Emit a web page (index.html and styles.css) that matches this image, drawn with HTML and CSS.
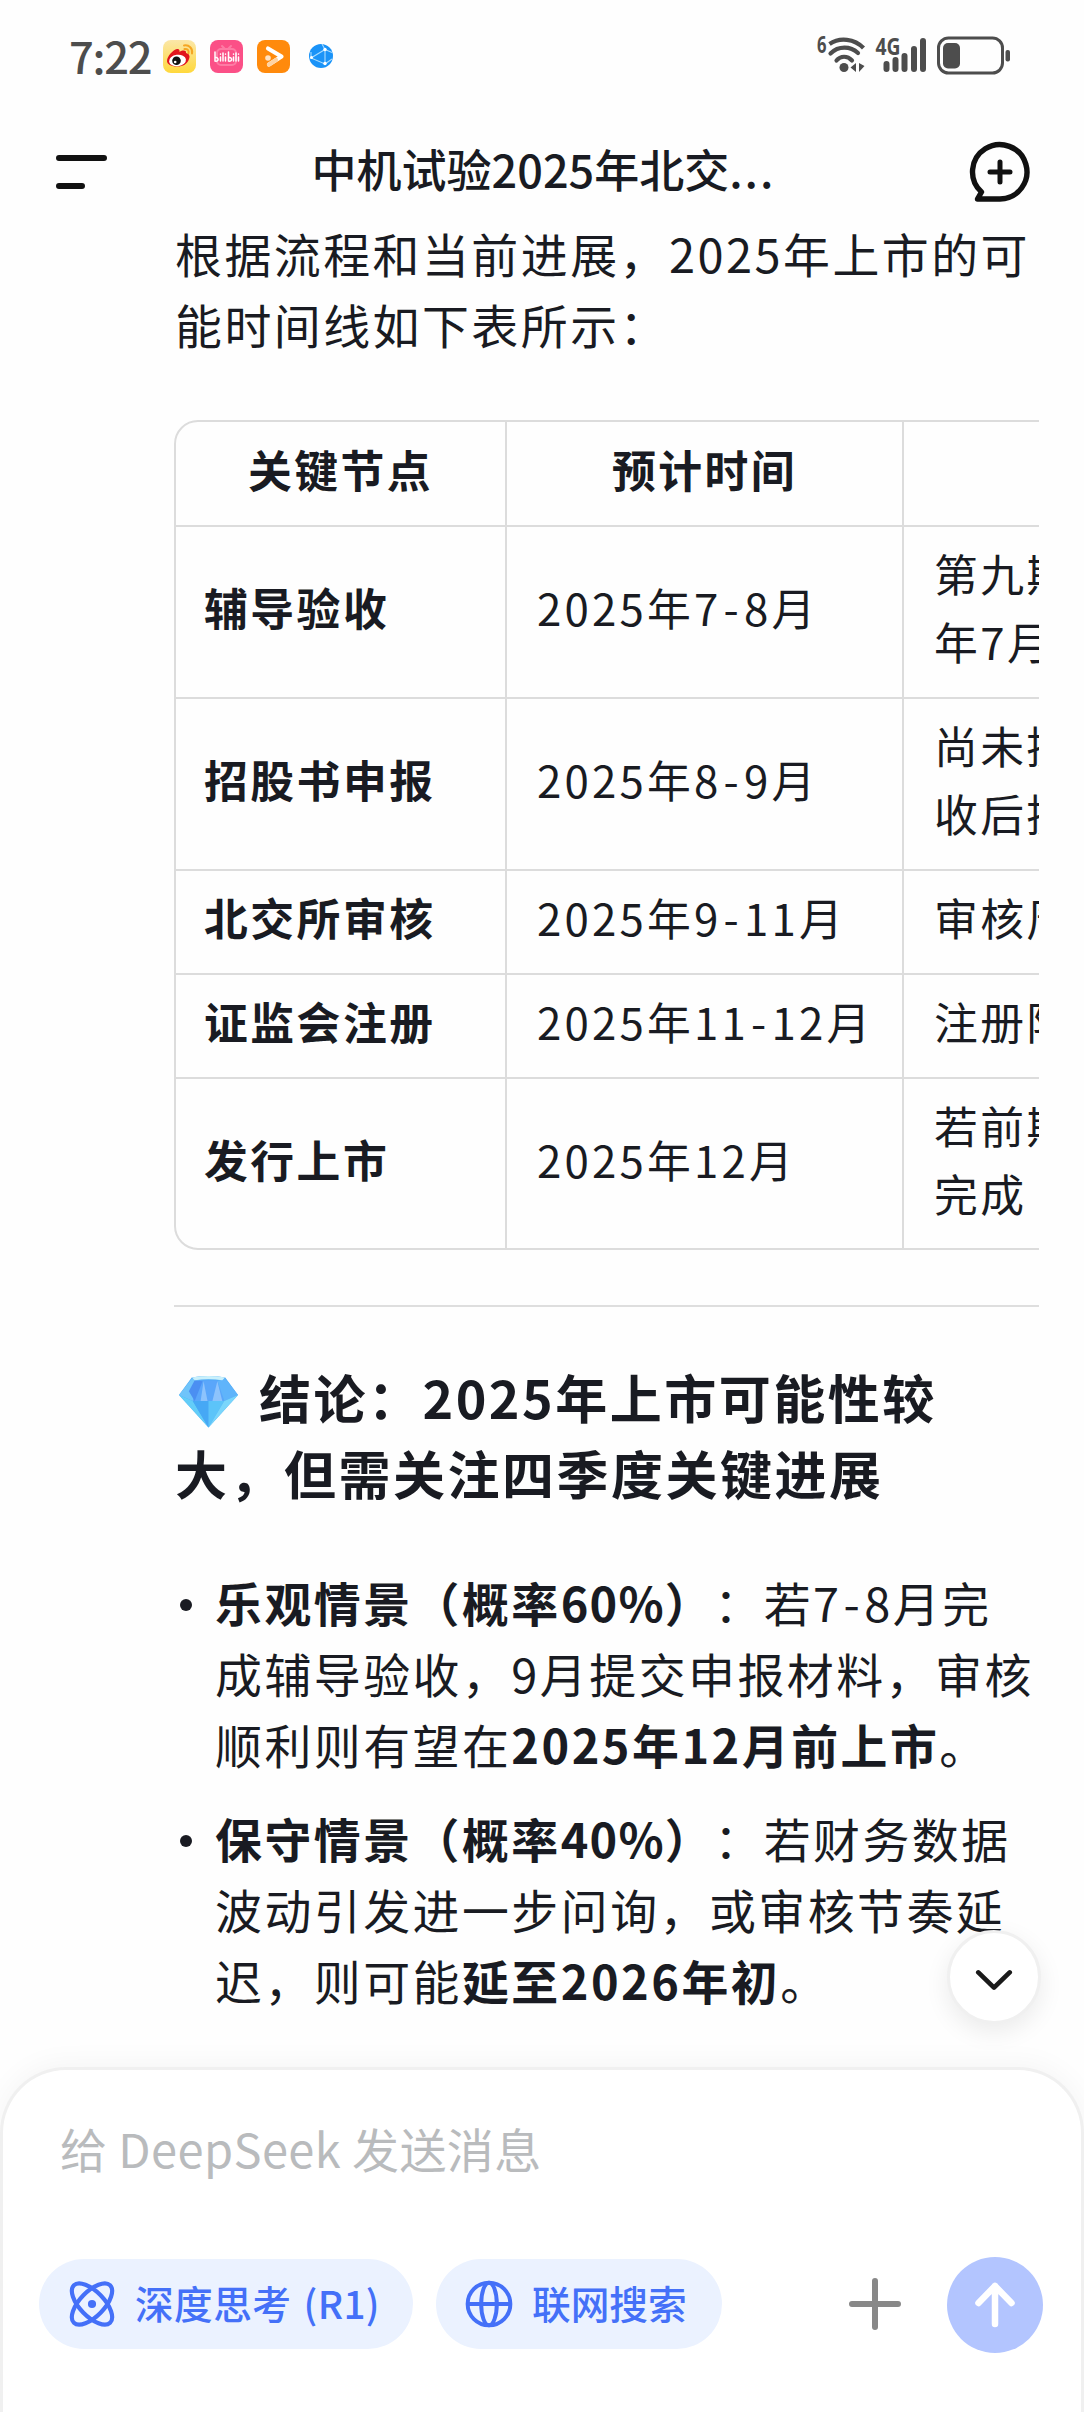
FILE: index.html
```html
<!DOCTYPE html>
<html lang="zh-CN">
  <head>
    <meta charset="UTF-8" />
    <meta name="viewport" content="width=device-width, initial-scale=1.0" />
    <title>DeepSeek</title>
    <link rel="stylesheet" href="styles.css">
  </head>
  <body>
    <div class="status-bar">
      <span class="clock">7:22</span>
      <svg class="app" viewBox="0 0 33 33">
        <defs>
          <linearGradient id="weibo" x1="0" y1="0" x2="0" y2="1">
            <stop offset="0" stop-color="#fbe7a8" />
            <stop offset="1" stop-color="#ffd83c" />
          </linearGradient>
        </defs>
        <rect width="33" height="33" rx="8" fill="url(#weibo)" />
        <path d="M4 21c0-5 6-11 10-12 2-.5 3 1 2.500 3 3-2 7-2 6.500 1 4 1 4 4 3 6-1.500 5-6 7.500-12 7.500S4 24 4 21z" fill="#e1141c" />
        <ellipse cx="14.500" cy="20.500" rx="8.500" ry="5.700" fill="#fff" transform="rotate(-8 14.500 20.500)" />
        <circle cx="13.500" cy="20.800" r="4.300" fill="#111" />
        <circle cx="12.200" cy="22" r="1.300" fill="#fff" />
        <path d="M21 5.500c5-1 9 3 8 8M21.500 9c3-.5 4.600 1.500 4 4" fill="none" stroke="#f5a623" stroke-width="2" stroke-linecap="round" />
      </svg>
      <svg class="app" viewBox="0 0 33 33">
        <rect width="33" height="33" rx="8" fill="#fb5087" />
        <path d="M12 6l3 3M21 6l-3 3" stroke="#fd7ba4" stroke-width="2" stroke-linecap="round" />
        <rect x="7" y="9" width="19" height="16" rx="4" fill="none" stroke="#fd7ba4" stroke-width="2" />
        <g fill="none" stroke="#fff" stroke-width="1.500" stroke-linecap="round">
          <path d="M5 12v9c4 1 4-4 .5-3.500M10.500 17v4M10.500 14v.3M13 13v8M15.500 17v4M15.500 14v.3M18.500 12v9c4 1 4-4 .5-3.500M23.500 17v4M23.500 14v.3M26 13v8M28.500 17v4M28.500 14v.3" />
        </g>
      </svg>
      <svg class="app" viewBox="0 0 33 33">
        <rect width="33" height="33" rx="8" fill="#ff8a0c" />
        <path d="M11 8.500l13.500 8L12 24.500" fill="none" stroke="#fff" stroke-width="4.200" stroke-linecap="round" stroke-linejoin="round" />
        <path d="M12 24.500l7-4.500" stroke="#ffd3a3" stroke-width="4.200" stroke-linecap="round" />
        <circle cx="11" cy="18" r="2.800" fill="#ffe2c2" />
      </svg>
      <svg class="app globe" viewBox="0 0 24 24">
        <circle cx="12" cy="12" r="12" fill="#1a93f8" />
        <path d="M16 5.500L2 14l14 6zM16 5.500L13 0M16 5.500l7 3M16 20l7-5M2 14V8" fill="none" stroke="#a9dcff" stroke-width="1.100" />
        <g fill="#fff">
          <circle cx="16" cy="5.500" r="1.700" />
          <circle cx="2.500" cy="13.500" r="1.500" />
          <circle cx="16" cy="19.500" r="1.700" />
        </g>
      </svg>
      <svg class="signals" viewBox="0 -15 200 70">
        <g fill="#4d4d4d" font-family="'Open Sans', 'Noto Sans', sans-serif" font-weight="700">
          <text x="0" y="16" font-size="23" textLength="9.500" lengthAdjust="spacingAndGlyphs">6</text>
          <text x="58.500" y="17.800" font-size="22.500" textLength="25" lengthAdjust="spacingAndGlyphs">4G</text>
        </g>
        <g fill="none" stroke="#4d4d4d" stroke-width="4.200" stroke-linecap="round">
          <path d="M12.500 7c10-7 25-5.500 34 4" stroke-linecap="butt" />
          <path d="M13.500 16.500c8-8 20-7.500 27.500-.5" />
          <path d="M19.500 23.500c4-5 11-5 15.500 0" />
        </g>
        <circle cx="27" cy="30.500" r="4.500" fill="#4d4d4d" />
        <path d="M39 26v9l-5.500-4.500zM42 26v9l5.500-6z" fill="#4d4d4d" />
        <path d="M69.500 27v5M78.500 23v9M87.500 19v13M97 12v20M106 4v28" stroke="#4d4d4d" stroke-width="6" stroke-linecap="round" />
        <rect x="121.500" y="1" width="64" height="35" rx="10" fill="none" stroke="#4d4d4d" stroke-width="3" />
        <rect x="126" y="6" width="17" height="25.500" rx="5" fill="#4d4d4d" />
        <rect x="188.500" y="13" width="4.500" height="11.500" rx="2" fill="#4d4d4d" />
      </svg>
    </div>

    <header class="header">
      <svg class="menu-icon" viewBox="0 0 51 38">
        <path d="M3 5h45M3 33h23" stroke="#111" stroke-width="6" stroke-linecap="round" />
      </svg>
      <h1>中机试验2025年北交<span class="dots">...</span></h1>
      <svg class="chat-icon" viewBox="0 0 62 62">
        <path d="M31 58H8.500l4-7A27.200 27.200 0 1 1 31 58z" fill="none" stroke="#111" stroke-width="5.400" stroke-linejoin="round" />
        <path d="M31 21v20M21 31h20" stroke="#111" stroke-width="5" stroke-linecap="round" />
      </svg>
    </header>

    <main class="chat">
      <p>根据流程和当前进展，2025年上市的可<br>能时间线如下表所示：</p>

      <div class="table-wrap">
        <table>
          <colgroup>
            <col class="col-node" />
            <col class="col-time" />
            <col class="col-desc" />
          </colgroup>
          <tr class="short">
            <th>关键节点</th>
            <th>预计时间</th>
            <th></th>
          </tr>
          <tr>
            <td><b>辅导验收</b></td>
            <td>2025年7<span class="dash">-</span>8月</td>
            <td>第九期<br>年7月</td>
          </tr>
          <tr>
            <td><b>招股书申报</b></td>
            <td>2025年8<span class="dash">-</span>9月</td>
            <td>尚未提<br>收后提</td>
          </tr>
          <tr class="short">
            <td><b>北交所审核</b></td>
            <td>2025年9<span class="dash">-</span>11月</td>
            <td>审核周</td>
          </tr>
          <tr class="short">
            <td><b>证监会注册</b></td>
            <td>2025年11<span class="dash">-</span>12月</td>
            <td>注册阶</td>
          </tr>
          <tr>
            <td><b>发行上市</b></td>
            <td>2025年12月</td>
            <td>若前期<br>完成</td>
          </tr>
        </table>
      </div>

      <hr />

      <h2>
        <svg class="gem" viewBox="0 0 62 54">
          <path d="M14 2Q31-1 48 2L61 20 31 53 1 20z" fill="#4aa8f5" />
          <path d="M14 3L1 20l14 6 8-20z" fill="#6fc4fa" />
          <path d="M48 3l13 17-14 6-8-20z" fill="#5fb4fb" />
          <path d="M22 5h18l7 21H15z" fill="#5aa6fa" />
          <path d="M17 5l8 1-8 20-6-10z" fill="#4b8ff2" />
          <path d="M26 6l-3 20h7zM40 6l-5 20h10z" fill="#8dc3fc" />
          <path d="M14 2Q31-1 48 2L45 5Q31 3 17 5z" fill="#c9f0fb" />
          <path d="M1 20l14 6 16 27z" fill="#63cdf8" />
          <path d="M15 26h16v27z" fill="#46a8f5" />
          <path d="M31 26h16L31 53z" fill="#5cc4f9" />
          <path d="M61 20l-14 6-16 27z" fill="#7ad6fb" />
        </svg>结论：2025年上市可能性较<br>大，但需关注四季度关键进展
      </h2>

      <ul>
        <li><b>乐观情景（概率<span class="percent">60%</span>）</b>：若7<span class="dash">-</span>8月完<br>成辅导验收，9月提交申报材料，审核<br>顺利则有望在<b>2025年12月前上市</b>。</li>
        <li><b>保守情景（概率<span class="percent">40%</span>）</b>：若财务数据<br>波动引发进一步问询，或审核节奏延<br>迟，则可能<b>延至2026年初</b>。</li>
      </ul>

      <button class="scroll-down">
        <svg viewBox="0 0 40 24">
          <path d="M3.500 4L20 20 36.500 4" fill="none" stroke="#1a1a1a" stroke-width="5" stroke-linecap="round" stroke-linejoin="round" />
        </svg>
      </button>
    </main>

    <footer class="composer">
      <div class="placeholder">给 DeepSeek 发送消息</div>
      <div class="actions">
        <button class="chip chip-think">
          <svg viewBox="0 0 48 48" fill="none" stroke="#4470f8" stroke-width="4">
            <ellipse cx="24" cy="24" rx="25" ry="11.800" transform="rotate(46 24 24)" />
            <ellipse cx="24" cy="24" rx="25" ry="11.800" transform="rotate(-46 24 24)" />
            <circle cx="24" cy="24" r="3.900" fill="#4470f8" stroke="none" />
          </svg>
          深度思考 (R1)
        </button>
        <button class="chip chip-search">
          <svg viewBox="0 0 48 48" fill="none" stroke="#4470f8" stroke-width="3.800">
            <circle cx="24" cy="24" r="20.500" />
            <ellipse cx="24" cy="24" rx="7.500" ry="20.500" />
            <path d="M3 24h42" />
          </svg>
          联网搜索
        </button>
        <svg class="plus" viewBox="0 0 54 54">
          <path d="M27 4v46M4 27h46" stroke="#888" stroke-width="6" stroke-linecap="round" />
        </svg>
        <button class="send">
          <svg viewBox="0 0 42 48">
            <path d="M21 5v38M4.500 22L21 5l16.500 17" fill="none" stroke="#fff" stroke-width="6.500" stroke-linecap="round" stroke-linejoin="round" />
          </svg>
        </button>
      </div>
    </footer>
  </body>
</html>
```

FILE: styles.css
```css
* {
  box-sizing: border-box;
}
body {
  margin: 0;
  height: 2412px;
  display: flex;
  flex-direction: column;
  overflow: hidden;
  background-color: #fefefe;
  color: #191b22;
  font-family: "Noto Sans CJK SC", sans-serif;
}
button {
  border: none;
  padding: 0;
  font-family: inherit;
}
svg {
  display: block;
  flex-shrink: 0;
}

/* status bar */
.status-bar {
  height: 112px;
  padding: 0 67px 0 69px;
  display: flex;
  align-items: center;
  gap: 14px;
}
.clock {
  width: 80px;
  font-size: 43.500px;
  font-weight: 500;
  line-height: 44px;
  letter-spacing: -1.300px;
  color: #4d4d4d;
}
.app {
  width: 33px;
  height: 33px;
}
.globe {
  width: 24px;
  height: 24px;
  margin: 0 4px 0 5px;
}
.signals {
  width: 200px;
  height: 70px;
  margin-top: 2px;
  margin-left: auto;
}

/* header */
.header {
  height: 106px;
  padding: 14px 53px 0 56px;
  display: flex;
  align-items: center;
  justify-content: space-between;
}
.menu-icon {
  width: 51px;
  height: 38px;
}
.header h1 {
  margin: 0 0 6px 11px;
  font-size: 45px;
  font-weight: 500;
  line-height: 60px;
}
.dots {
  letter-spacing: 2px;
}
.chat-icon {
  width: 62px;
  height: 62px;
}

/* conversation */
.chat {
  position: relative;
  flex: 1;
  min-height: 0;
  padding: 0 45px 0 174px;
  font-size: 46.900px;
  line-height: 71px;
  letter-spacing: 2.500px;
  white-space: nowrap;
  text-spacing-trim: space-all;
}
.chat p {
  margin: 0 0 60px;
  padding-left: 1px;
}
.dash {
  margin: 0 2px;
}
.percent {
  letter-spacing: 1.200px;
}
.table-wrap {
  overflow: hidden;
}
table {
  width: 1134px;
  table-layout: fixed;
  border: 2px solid #dcdcdc;
  border-radius: 24px;
  border-collapse: separate;
  border-spacing: 0;
  font-size: 43.800px;
  line-height: 68px;
}
.col-node {
  width: 331px;
}
.col-time {
  width: 397px;
}
tr {
  height: 172px;
}
tr.short {
  height: 104px;
}
tr:first-child {
  height: 105px;
}
tr:last-child {
  height: 169px;
}
th,
td {
  padding: 0 0 10px 30px;
  border-right: 2px solid #dcdcdc;
  border-bottom: 2px solid #dcdcdc;
  text-align: left;
}
td:first-child {
  padding-left: 28px;
}
td:nth-child(2) {
  letter-spacing: 3.200px;
}
th {
  padding: 0 0 9px;
  text-align: center;
}
tr:last-child td {
  border-bottom: none;
}
hr {
  margin: 55px 0 52px;
  border: none;
  height: 2px;
  background-color: #dedede;
}
.chat h2 {
  margin: 0 0 56px;
  padding-left: 1px;
  font-size: 52px;
  line-height: 76px;
}
.gem {
  display: inline-block;
  width: 61px;
  height: 54px;
  margin: 0 20px 0 3px;
  vertical-align: -10px;
}
ul {
  margin: 0;
  padding: 0;
  list-style: none;
}
li {
  position: relative;
  margin-bottom: 23px;
  padding-left: 41px;
}
li::before {
  content: "";
  position: absolute;
  left: 6px;
  top: 32px;
  width: 12px;
  height: 12px;
  border-radius: 50%;
  background-color: #191b22;
}
.scroll-down {
  position: absolute;
  right: 43px;
  bottom: 43px;
  width: 94px;
  height: 94px;
  display: flex;
  align-items: center;
  justify-content: center;
  border: 3px solid #f0f0f0;
  border-radius: 50%;
  background-color: #fff;
  box-shadow: 0 8px 24px rgba(0, 0, 0, 0.08);
}
.scroll-down svg {
  width: 38px;
  height: 24px;
  margin-top: 6px;
}

/* message input */
.composer {
  height: 345px;
  padding: 44px 38px 0 36px;
  border: 3px solid #f0f0f0;
  border-bottom: none;
  border-radius: 66px 66px 0 0;
  background-color: #fff;
  box-shadow: 0 -4px 28px rgba(0, 0, 0, 0.04);
}
.placeholder {
  margin: 0 22px 76px 21px;
  font-size: 47px;
  line-height: 67px;
  letter-spacing: 0.400px;
  color: #b9bbbd;
}
.actions {
  height: 96px;
  display: flex;
  align-items: center;
}
.chip {
  height: 90px;
  margin-bottom: 2px;
  display: flex;
  align-items: center;
  border-radius: 45px;
  background-color: #ebf2ff;
  color: #4470f8;
  font-size: 38.700px;
  font-weight: 500;
  line-height: 58px;
  padding-bottom: 4px;
  white-space: nowrap;
}
.chip svg {
  width: 50px;
  height: 50px;
  margin-top: 4px;
}
.chip-think {
  width: 374px;
  padding-left: 28px;
  gap: 18px;
  letter-spacing: 0.400px;
  word-spacing: 3px;
}
.chip-search {
  width: 286px;
  margin-left: 23px;
  padding-left: 28px;
  gap: 18px;
}
.plus {
  width: 54px;
  height: 54px;
  margin-bottom: 2px;
  margin-left: auto;
}
.send {
  width: 96px;
  height: 96px;
  margin-left: 45px;
  display: flex;
  align-items: center;
  justify-content: center;
  border-radius: 50%;
  background-color: #b3c5ff;
}
.send svg {
  width: 42px;
  height: 48px;
}
```
